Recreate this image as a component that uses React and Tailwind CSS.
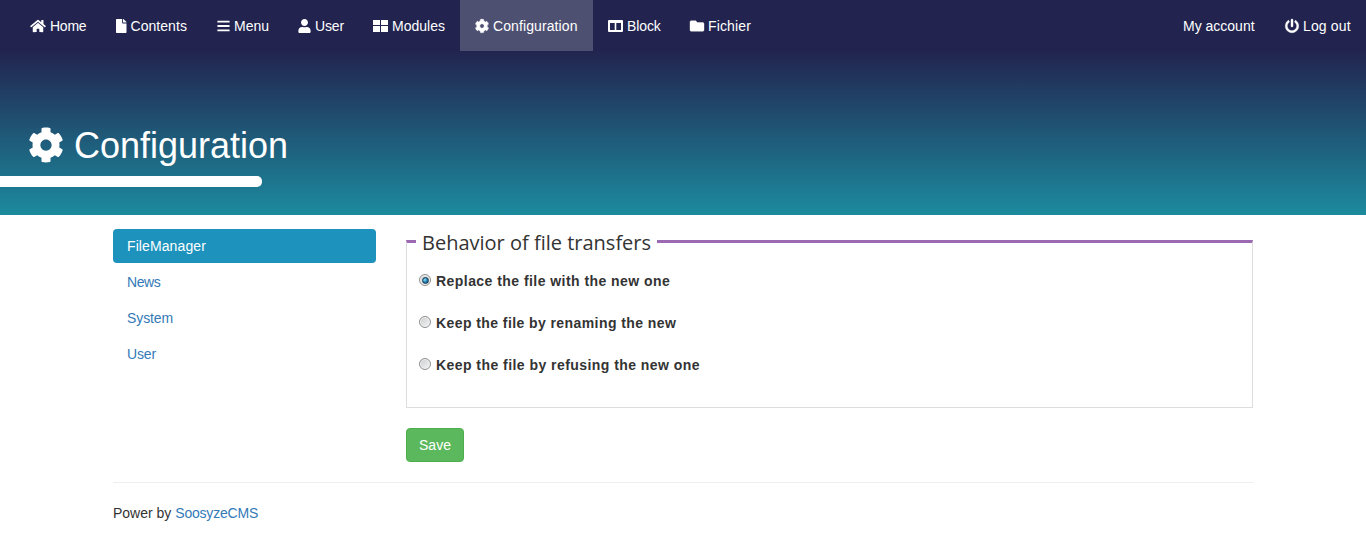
import { FaHome, FaFile, FaBars, FaUser, FaCog, FaFolder, FaPowerOff } from "react-icons/fa";

function TilesIcon({ className }) {
  return (
    <svg viewBox="0 0 15 14" fill="currentColor" stroke="none" shapeRendering="crispEdges" className={className}>
      <path d="M0 1h7v5H0zM8 1h7v5H8zM0 7h7v6H0zM8 7h7v6H8z" />
    </svg>
  );
}

function ColumnsIcon({ className }) {
  return (
    <svg viewBox="0 0 15 14" fill="currentColor" stroke="none" fillRule="evenodd" className={className}>
      <path d="M1 1h13a1 1 0 0 1 1 1v10a1 1 0 0 1-1 1H1a1 1 0 0 1-1-1V2a1 1 0 0 1 1-1zM2 4v7h4.7V4zM8.3 4v7H13V4z" />
    </svg>
  );
}

const nav = [
  { label: "Home", Icon: FaHome, width: "w-[86px]", icon: "w-4", text: "tracking-[-0.25px]" },
  { label: "Contents", Icon: FaFile, width: "w-[101px]", icon: "w-[10.5px]", text: "tracking-[0.05px]" },
  { label: "Menu", Icon: FaBars, width: "w-[81px]", icon: "w-[13px]", text: "" },
  { label: "User", Icon: FaUser, width: "w-[75px]", icon: "w-[13px]", text: "-tracking-[0.15px]" },
  { label: "Modules", Icon: TilesIcon, width: "w-[102px]", icon: "w-[15px]", text: "" },
  { label: "Configuration", Icon: FaCog, width: "w-[133px]", icon: "w-[14px] stroke-current stroke-[18]", text: "tracking-[0.1px]", active: true },
  { label: "Block", Icon: ColumnsIcon, width: "w-[82px]", icon: "w-[15px]", text: "tracking-[-0.1px]" },
  { label: "Fichier", Icon: FaFolder, width: "w-[91px]", icon: "w-[14px] stroke-current stroke-[14]", text: "tracking-[0.15px]" },
];

const sections = [
  { label: "FileManager", style: "bg-[#1c92bd] text-white tracking-[0.1px]" },
  { label: "News", style: "text-[#337ab7] tracking-[-0.4px]" },
  { label: "System", style: "text-[#337ab7] tracking-[-0.1px]" },
  { label: "User", style: "text-[#337ab7] tracking-[-0.15px]" },
];

const options = [
  { label: "Replace the file with the new one", style: "tracking-[0.45px]" },
  { label: "Keep the file by renaming the new", style: "tracking-[0.42px]" },
  { label: "Keep the file by refusing the new one", style: "tracking-[0.45px]" },
];

function NavItem({ label, Icon, width, icon, text, active }) {
  return (
    <li className={width}>
      <a
        href="#"
        className={`flex h-[51px] items-center gap-1 whitespace-nowrap pl-[15px] pt-px ${active ? "bg-[#4e5072]" : ""}`}
      >
        <Icon className={`h-[14px] shrink-0 overflow-visible ${icon}`} />
        <span className={text}>{label}</span>
      </a>
    </li>
  );
}

function Radio({ checked }) {
  return (
    <span className="relative flex size-3 shrink-0">
      <input
        type="radio"
        name="behavior"
        defaultChecked={checked}
        className="size-3 appearance-none rounded-full border border-[#8e8f8f] bg-linear-to-br from-[#c9cccf] to-[#f6f6f6] shadow-[inset_0_0_0_1px_#f4f4f4]"
      />
      {checked && (
        <span className="pointer-events-none absolute left-[2.5px] top-[2.5px] size-[7px] rounded-full border border-[#17364f] bg-radial-[at_35%_35%] from-[#8fe0f8] via-[#2084b4] to-[#0b4d7d]" />
      )}
    </span>
  );
}

export default function App() {
  return (
    <div className="h-[533px] overflow-hidden bg-white font-['Liberation_Sans',Arial,sans-serif] text-sm leading-5 text-[#333]">
      <header className="h-[215px] bg-linear-to-b/srgb from-[#22244f] from-[51px] to-[#1c8a9e] text-white">
        <nav className="flex justify-between pl-[15px]">
          <ul className="flex">
            {nav.map((item) => (
              <NavItem key={item.label} {...item} />
            ))}
          </ul>
          <ul className="flex">
            <li className="w-[102px]">
              <a href="#" className="flex h-[51px] items-center pl-[15px] pt-px">
                My account
              </a>
            </li>
            <NavItem label="Log out" Icon={FaPowerOff} width="w-[96px]" icon="w-[14px] stroke-current stroke-[8]" text="tracking-[0.15px]" />
          </ul>
        </nav>
        <h1 className="mt-[74px] flex h-10 items-center pl-7 text-4xl leading-10">
          <FaCog className="mr-[10px] size-9" />
          <span className="pt-0.5">Configuration</span>
        </h1>
        <div className="mt-[11px] h-[11px] w-[262px] rounded-r-[5px] bg-white" />
      </header>

      <main className="mx-auto w-[1140px] pt-[14px]">
        <div className="flex gap-[30px]">
          <ul className="flex w-[263px] flex-col gap-0.5">
            {sections.map(({ label, style }) => (
              <li key={label}>
                <a href="#" className={`flex h-[34px] items-center rounded px-[14px] ${style}`}>
                  {label}
                </a>
              </li>
            ))}
          </ul>
          <form className="w-[847px]">
            <fieldset className="h-[179px] border border-t-[3px] border-[#ddd] border-t-[#9b69b1] pl-3">
              <legend className="-ml-[3px] h-[25px] px-1.5 font-['Open_Sans',sans-serif] text-[20px] leading-[28px]">
                Behavior of file transfers
              </legend>
              <div className="flex flex-col gap-[22px] pt-[17px]">
                {options.map(({ label, style }, i) => (
                  <label key={label} className={`flex h-5 items-center gap-[5px] font-bold ${style}`}>
                    <span className="-mt-0.5">
                      <Radio checked={i === 0} />
                    </span>
                    {label}
                  </label>
                ))}
              </div>
            </fieldset>
            <button
              type="button"
              className="mt-5 h-[34px] w-[58px] rounded border border-[#4cae4c] bg-[#5cb85c] text-white"
            >
              Save
            </button>
          </form>
        </div>
        <footer className="mt-5 border-t border-[#eee] pt-5">
          Power by{" "}
          <a href="#" className="tracking-[-0.2px] text-[#337ab7]">
            SoosyzeCMS
          </a>
        </footer>
      </main>
    </div>
  );
}
